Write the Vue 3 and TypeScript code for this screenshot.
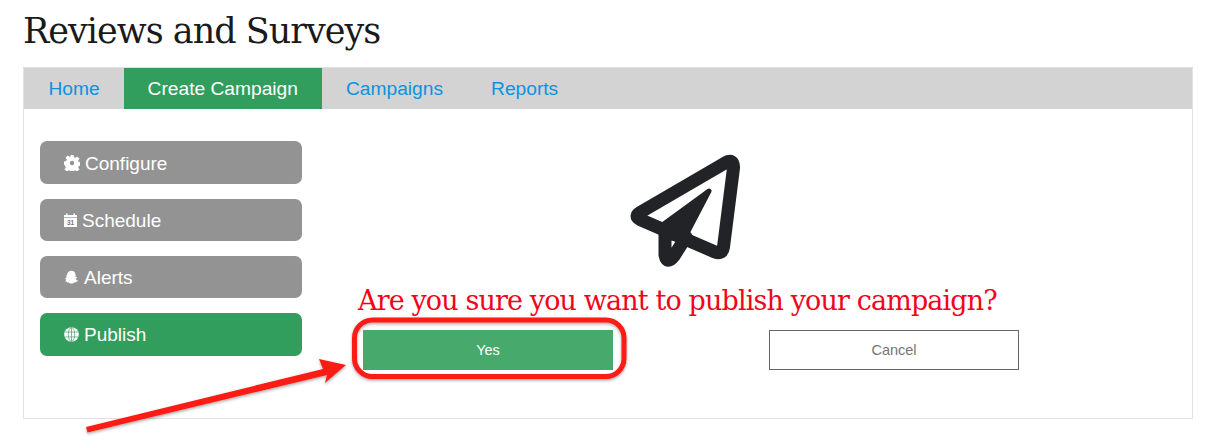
<template>
  <div class="page">
    <h1 class="title">Reviews and Surveys</h1>
    <div class="panel">
      <nav class="tabs">
        <a
          v-for="tab in tabs"
          :key="tab"
          class="tab"
          :class="{ active: tab === 'Create Campaign' }"
        >{{ tab }}</a>
      </nav>
      <div class="body">
        <aside class="steps">
          <div class="step">
            <svg class="step-icon gear" viewBox="0 0 16 16">
              <path fill="#fff" fill-rule="evenodd" d="M6.400 0h3.200l.4 2.200 1.400.6 1.900-1.300 2.200 2.200-1.300 1.900.6 1.400 2.200.4v3.200l-2.200.4-.6 1.400 1.300 1.900-2.200 2.200-1.900-1.300-1.400.6-.4 2.200H6.400l-.4-2.200-1.400-.6-1.900 1.300-2.200-2.200 1.300-1.900-.6-1.400L0 9.600V6.400l2.200-.4.6-1.400-1.300-1.900 2.200-2.200 1.900 1.300 1.400-.6zM8 5.800a2.200 2.200 0 1 0 0 4.400 2.200 2.200 0 0 0 0-4.400z" />
            </svg>
            <span>Configure</span>
          </div>
          <div class="step">
            <svg class="step-icon cal" viewBox="0 0 13 14">
              <path fill="#fff" d="M0 2h2V0.500h1.500V2h6V0.500H11V2h2v12H0z" />
              <path fill="none" stroke="#939393" stroke-width="0.700" d="M0 4.600h13" />
              <text x="6.500" y="12.300" class="cal-day">31</text>
            </svg>
            <span>Schedule</span>
          </div>
          <div class="step">
            <svg class="step-icon" viewBox="0 0 16 16">
              <path fill="#fff" d="M8 .8c2.800 0 4.300 2.100 4.300 4.400 0 .8 0 1.500.1 2.100.5.300 1.200 0 1.500.3.300.4-.2.900-1.300 1.400.4 1.300 1.300 2 2.400 2.500-.2.800-1.200.9-2 1-.3.800-1 .600-1.800.7-1 .2-1.600 1.300-3.200 1.300s-2.200-1.100-3.200-1.300c-.8-.1-1.500.1-1.800-.7-.8-.1-1.800-.2-2-1C1.100 12 2 11.300 2.400 10c-1.100-.5-1.600-1-1.300-1.400.3-.3 1 0 1.500-.3.100-.6.100-1.300.1-2.100C3.700 2.900 5.200.8 8 .8z" />
            </svg>
            <span>Alerts</span>
          </div>
          <div class="step done">
            <svg class="step-icon" viewBox="0 0 16 16">
              <circle cx="8" cy="8" r="7.800" fill="#fff" />
              <g fill="none" stroke="#319e5d" stroke-width="0.700">
                <ellipse cx="8" cy="8" rx="3.400" ry="7.400" />
                <path d="M8 .6v14.800M1 5.400h14M1 10.600h14" />
              </g>
            </svg>
            <span>Publish</span>
          </div>
        </aside>
        <section class="main">
          <svg class="plane" viewBox="0 0 150 140">
            <g fill="none" stroke="#212327" stroke-width="13" stroke-linejoin="round" stroke-linecap="round">
              <path d="M119 23Q128 18 127.500 28L117.500 107Q116.500 115 109 112L34 79.500Q28 76 34 72.500z" />
              <path d="M59 92L59 115Q61 125 68 116L80 97" />
            </g>
            <path fill="#212327" stroke="#212327" stroke-width="5" stroke-linejoin="round" d="M103 51L55 86l3 12 16 0 6-3z" />
          </svg>
          <p class="question">Are you sure you want to publish your campaign?</p>
          <div class="actions">
            <button class="btn yes">Yes</button>
            <button class="btn cancel">Cancel</button>
          </div>
        </section>
      </div>
    </div>
    <svg class="markup" width="1231" height="448" viewBox="0 0 1231 448">
      <defs>
        <filter id="soft" x="-5%" y="-20%" width="110%" height="140%">
          <feDropShadow dx="0" dy="1.500" stdDeviation="1.500" flood-color="#000" flood-opacity="0.350" />
        </filter>
      </defs>
      <g filter="url(#soft)">
        <rect x="354.500" y="320" width="269.500" height="56.500" rx="18" fill="none" stroke="#fb1c14" stroke-width="5" />
        <path fill="#fb1c14" d="M86 427L87.500 432.500 327 375 325 383 346 365 319 359 323 369z" />
      </g>
    </svg>
  </div>
</template>

<script setup lang="ts">
const tabs: string[] = ['Home', 'Create Campaign', 'Campaigns', 'Reports']
</script>

<style>
body {
  background: #fff;
}
</style>

<style scoped>
.page {
  position: relative;
  width: 1231px;
  height: 448px;
  padding: 0 38px 0 23px;
  box-sizing: border-box;
  overflow: hidden;
  font-family: "Liberation Sans", Arial, sans-serif;
}

.title {
  margin: 0;
  height: 67px;
  box-sizing: border-box;
  padding-top: 9px;
  font-family: "DejaVu Serif", serif;
  font-size: 35px;
  line-height: 44px;
  letter-spacing: -1px;
  font-weight: 400;
  color: #1a1a1a;
}

.panel {
  height: 352px;
  box-sizing: border-box;
  border: 1px solid #e2e2e2;
}

.tabs {
  display: flex;
  height: 41px;
  padding-left: 0.400px;
  background: #d3d3d3;
}

.tab {
  padding: 0 24px;
  font-size: 19.200px;
  line-height: 41px;
  color: #0a94e0;
}

.tab.active {
  background: #319e5d;
  color: #fff;
}

.body {
  display: flex;
  padding: 32.300px 16px 0;
}

.steps {
  width: 262px;
  display: flex;
  flex-direction: column;
  gap: 14.800px;
}

.step {
  height: 42.500px;
  box-sizing: border-box;
  padding: 2px 0 0 24px;
  display: flex;
  align-items: center;
  gap: 5px;
  border-radius: 7px;
  background: #939393;
  color: #fff;
  font-size: 19px;
}

.step.done {
  background: #319e5d;
}

.step-icon {
  width: 15px;
  height: 15px;
  flex: none;
  margin-top: -2px;
}

.step-icon.gear {
  width: 16px;
  height: 16px;
}

.step-icon.cal {
  width: 13px;
  height: 14px;
}

.cal-day {
  font-family: "Liberation Sans", Arial, sans-serif;
  font-size: 6.500px;
  font-weight: 700;
  fill: #777;
  text-anchor: middle;
}

.main {
  flex: 1;
  display: flex;
  flex-direction: column;
  padding: 13px 0 0 56px;
}

.plane {
  width: 150px;
  height: 140px;
  margin: -14px 0 0 248px;
}

.question {
  margin: 4px 0 0;
  font-family: "DejaVu Serif", serif;
  font-size: 27px;
  line-height: 34px;
  letter-spacing: -0.870px;
  color: #f2041c;
  white-space: nowrap;
}

.actions {
  display: flex;
  gap: 156px;
  margin: 12px 0 0 5px;
}

.btn {
  width: 250px;
  height: 40px;
  font-family: inherit;
  font-size: 14.500px;
}

.yes {
  border: 0;
  background: #47a96b;
  color: #fff;
}

.cancel {
  border: 1px solid #666;
  background: #fff;
  color: #757575;
}

.markup {
  position: absolute;
  left: 0;
  top: 0;
  pointer-events: none;
}
</style>
